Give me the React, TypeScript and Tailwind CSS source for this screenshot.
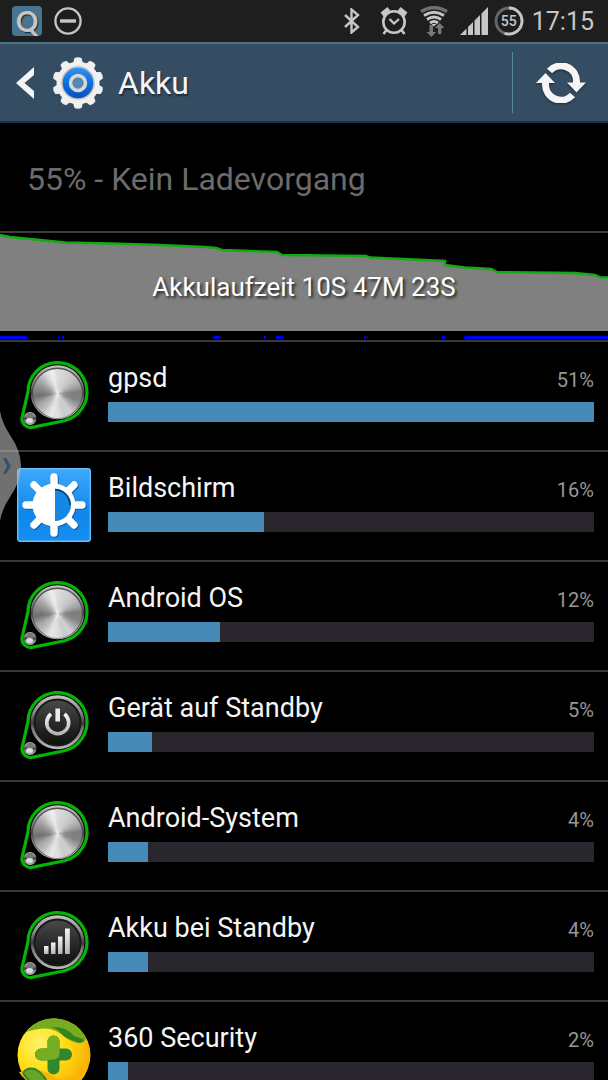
import React from 'react'

type IconKind = 'steel' | 'display' | 'power' | 'signal' | 'security'

interface UsageEntry {
  name: string
  percent: number
  fill: number
  icon: IconKind
}

// fill is the bar length relative to the biggest consumer
const usage: UsageEntry[] = [
  { name: 'gpsd', percent: 51, fill: 100, icon: 'steel' },
  { name: 'Bildschirm', percent: 16, fill: 32.2, icon: 'display' },
  { name: 'Android OS', percent: 12, fill: 23.1, icon: 'steel' },
  { name: 'Gerät auf Standby', percent: 5, fill: 9.1, icon: 'power' },
  { name: 'Android-System', percent: 4, fill: 8.2, icon: 'steel' },
  { name: 'Akku bei Standby', percent: 4, fill: 8.2, icon: 'signal' },
  { name: '360 Security', percent: 2, fill: 4.2, icon: 'security' },
]

// [start, width] of the awake periods
const awake = [
  [0, 27], [58, 1], [62, 2], [213, 7], [221, 1], [264, 2], [276, 5], [282, 1],
  [364, 2], [367, 1], [442, 3], [464, 1], [466, 142],
]

const BeltIcon = ({ kind }: { kind: IconKind }) => (
  <svg viewBox="0 0 74 74" className="h-[74px] w-[74px]" aria-hidden="true">
    <defs>
      <linearGradient id="rim" x1="0" y1="0" x2="0" y2="1">
        <stop offset="0" stopColor="#c4c4c4" />
        <stop offset="0.3" stopColor="#8a8a8a" />
        <stop offset="0.52" stopColor="#3c3c3c" />
        <stop offset="0.62" stopColor="#777" />
        <stop offset="1" stopColor="#bbb" />
      </linearGradient>
      <linearGradient id="face" x1="0" y1="0" x2="0" y2="1">
        <stop offset="0" stopColor="#4a4a4a" />
        <stop offset="0.5" stopColor="#2b2b2b" />
        <stop offset="1" stopColor="#0a120a" />
      </linearGradient>
      <linearGradient id="glyph" x1="0" y1="0" x2="0" y2="1">
        <stop offset="0" stopColor="#f4f4f4" />
        <stop offset="1" stopColor="#b5b5b5" />
      </linearGradient>
      <radialGradient id="knob" cx="0.5" cy="0.5" r="0.5">
        <stop offset="0" stopColor="#fff" stopOpacity="0.7" />
        <stop offset="0.5" stopColor="#ccc" stopOpacity="0.15" />
        <stop offset="1" stopColor="#ccc" stopOpacity="0" />
      </radialGradient>
    </defs>
    <path d="M11 33.5 A29.5 29.5 0 1 1 47.5 62.7 L15 69.4 A8.6 8.6 0 0 1 5 60 Z" fill="#000" stroke="#04b604" strokeWidth="3.2" />
    <circle cx="40.5" cy="34.3" r="27" fill="url(#rim)" />
    {kind === 'steel' ? (
      <>
        <circle cx="40.5" cy="35" r="25.5" fill="#505050" />
        <foreignObject x="16" y="11" width="49" height="49">
          <div className="h-full w-full rounded-full bg-[conic-gradient(#dcdcdc,#cfcfcf_8%,#c0c0c0_14%,#a0a0a0_20%,#7c7c7c_24%,#828282_30%,#a8a8a8_35%,#d0d0d0_40%,#cacaca_45%,#dedede_50%,#e8e8e8_55%,#c0c0c0_61%,#a4a4a4_67%,#707070_73%,#858585_78%,#a8a8a8_85%,#d4d4d4_91%,#efefef_96%,#dcdcdc)]" />
        </foreignObject>
        <circle cx="40.5" cy="35.5" r="16" fill="url(#knob)" />
      </>
    ) : (
      <circle cx="40.5" cy="34.5" r="23" fill="url(#face)" stroke="#191919" strokeWidth="2" />
    )}
    {kind === 'power' && (
      <g fill="none" stroke="url(#glyph)">
        <path d="M34 26 A11 11 0 1 0 47.4 26" strokeWidth="3.6" />
        <path d="M38.4 20.5h4.6v13h-4.600z" fill="#ececec" stroke="none" />
      </g>
    )}
    {kind === 'signal' && (
      <g fill="url(#glyph)">
        <rect x="27" y="38" width="4.5" height="8" />
        <rect x="34" y="34.5" width="4.5" height="11.5" />
        <rect x="41" y="28.5" width="4.5" height="17.5" />
        <rect x="48" y="20.5" width="4.8" height="25.5" />
      </g>
    )}
    <circle cx="13" cy="60.5" r="6.5" fill="url(#rim)" />
    <circle cx="13" cy="58" r="3.6" fill="#777" />
    <ellipse cx="12.5" cy="62.5" rx="3.5" ry="2.5" fill="#dcdcdc" />
  </svg>
)

const DisplayIcon = () => (
  <svg viewBox="0 0 74 74" className="h-[74px] w-[74px]" aria-hidden="true">
    <defs>
      <linearGradient id="display" x1="0" y1="0" x2="0" y2="1">
        <stop offset="0" stopColor="#3fa9fb" />
        <stop offset="0.6" stopColor="#0f87ea" />
        <stop offset="1" stopColor="#168ff0" />
      </linearGradient>
    </defs>
    <rect x="0.7" y="0.7" width="72.6" height="72.6" rx="2.5" fill="url(#display)" stroke="#69bff8" strokeWidth="1.4" />
    {['#1160ae', '#fff'].map((color, i) => (
      <g key={color} transform={i === 0 ? 'translate(1 1)' : undefined}>
        <path d="M37 9v56M9 37h56M17 17l40 40M57 17l-40 40" stroke={color} strokeWidth="7.4" strokeLinecap="round" />
        <circle cx="37" cy="37" r="21.5" fill={color} />
      </g>
    ))}
    <path d="M38 21 a16 16 0 0 1 0 32 z" fill="#1587e6" />
    <path d="M38 21.6 a15.4 15.4 0 0 1 15 15.4" fill="none" stroke="#143f6b" strokeWidth="1.6" />
  </svg>
)

const SecurityIcon = () => (
  <svg viewBox="0 0 74 74" className="h-[74px] w-[74px]" aria-hidden="true">
    <defs>
      <radialGradient id="ball" cx="0.3" cy="0.35" r="0.75">
        <stop offset="0" stopColor="#fff36a" />
        <stop offset="0.5" stopColor="#ffdc12" />
        <stop offset="1" stopColor="#f7ab05" />
      </radialGradient>
    </defs>
    <circle cx="37" cy="37" r="36.5" fill="url(#ball)" />
    <path d="M2 54 Q26 48 38 60 Q58 66 71 36 Q74 58 57 68 Q38 78 19 68 Q7 63 2 54" fill="#f9b406" />
    <path d="M9 14 Q22 -1 40 0.5 Q60 3 69 20 Q68 26 61 25 Q51 23 44 16 Q32 6 9 14" fill="#77ab20" />
    <path d="M36 9 Q50 9 57 18 Q63 20 67 22 Q64 27 57 23 Q47 20 42 13 Q39 10 34 9" fill="#34831f" />
    <path d="M6 55 Q10 49 18 51 Q27 56 31 66 Q21 70 15 65 Q9 60 6 55" fill="#65a52a" stroke="#328225" strokeWidth="2" />
    <path d="M36.5 23.5v27M24 36.5h25" stroke="#32872c" strokeWidth="12" strokeLinecap="round" />
    <path d="M36.5 23.5v12l-12 1" fill="none" stroke="#77ad22" strokeWidth="12" strokeLinecap="round" strokeLinejoin="round" />
  </svg>
)

const EntryIcon = ({ kind }: { kind: IconKind }) => {
  if (kind === 'display') return <DisplayIcon />
  if (kind === 'security') return <SecurityIcon />
  return <BeltIcon kind={kind} />
}

const StatusBar = () => (
  <div className="flex h-[42px] items-center justify-between bg-[#1e1e1e] pl-3 pr-3.5 text-[#c6c6c6]">
    <div className="flex items-center gap-3">
      <span className="flex h-[30px] w-[30px] items-center justify-center rounded bg-[#477591] font-['Lato'] text-[28px] leading-none font-bold [text-shadow:1px_1px_1px_#222]">Q</span>
      <svg viewBox="0 0 28 28" className="h-7 w-7" aria-hidden="true">
        <circle cx="14" cy="14" r="12.6" fill="none" stroke="currentColor" strokeWidth="2.3" />
        <path d="M6 14h16" stroke="currentColor" strokeWidth="3.4" />
      </svg>
    </div>
    <div className="flex items-center">
      <svg viewBox="0 0 16 26" className="mr-5 h-[26px] w-4" fill="none" stroke="currentColor" strokeWidth="2.4" aria-hidden="true">
        <path d="M1 7l13 12-6.5 5.5V1.500L14 7 1 19" />
      </svg>
      <svg viewBox="0 0 28 28" className="mr-3 h-7 w-7" fill="none" stroke="currentColor" aria-hidden="true">
        <circle cx="14" cy="15" r="10.7" strokeWidth="2.6" />
        <path d="M2 7.500l7-5.500M26 7.500l-7-5.500" strokeWidth="4.800" />
        <path d="M6.5 23l-3 4M21.5 23l3 4" strokeWidth="2.6" />
        <path d="M9.5 12l4.5 4.5 5-4.500" strokeWidth="2.3" />
      </svg>
      <svg viewBox="0 0 28 31" className="mr-3 h-[31px] w-7" fill="none" aria-hidden="true">
        <path d="M1 5.500Q14-2.500 27 5.500" stroke="#707070" strokeWidth="3.4" />
        <path d="M4 9.500Q14 3 24 9.500M7 13.500Q14 8.500 21 13.500M10 17Q14 14 18 17" stroke="currentColor" strokeWidth="2.9" />
        <path d="M11.5 18h5L14 20.500z" fill="currentColor" />
        <path d="M9.5 19h3.5v7h3l-4.700 5-4.700-5h2.900zM18 28v-6h-3l4.700-5 4.700 5h-3v6z" fill="#787878" />
      </svg>
      <svg viewBox="0 0 28 28" className="mr-1.5 h-7 w-7" fill="currentColor" aria-hidden="true">
        <path d="M0 28l6.500-6.500v6.500zM8 28v-8l5-5v13zM14.500 28V13.500l5.500-5.500v20zM21.500 28V6.500L28 0v28z" />
      </svg>
      <div className="relative mr-2 flex h-[30px] w-[30px] items-center justify-center">
        <svg viewBox="0 0 30 30" className="absolute inset-0 h-full w-full" fill="none" strokeWidth="2.8" aria-hidden="true">
          <circle cx="15" cy="15" r="13" stroke="#686868" />
          <path d="M15 2a13 13 0 1 1-4.500 25.200" stroke="#c6c6c6" />
        </svg>
        <span className="relative text-sm leading-none font-medium">55</span>
      </div>
      <span className="text-[25px] leading-none">17:15</span>
    </div>
  </div>
)

const GearIcon = () => (
  <svg viewBox="0 0 52 52" className="h-[52px] w-[52px]" aria-hidden="true">
    <defs>
      <linearGradient id="blue" x1="0" y1="0" x2="0" y2="1">
        <stop offset="0" stopColor="#3395ef" />
        <stop offset="0.5" stopColor="#0871df" />
        <stop offset="1" stopColor="#0450bd" />
      </linearGradient>
    </defs>
    <g fill="#f0f0f0">
      {[0, 36, 72, 108, 144, 180, 216, 252, 288, 324].map(angle => (
        <path key={angle} d="M20.5 8l2-7q3.500-1.500 7 0l2 7z" transform={`rotate(${angle} 26 26)`} />
      ))}
      <circle cx="26" cy="26" r="21.5" />
    </g>
    <circle cx="26" cy="26" r="16" fill="url(#blue)" stroke="#bdbdbd" strokeWidth="1.5" />
    <circle cx="26" cy="26" r="7.5" fill="#5788b5" stroke="#d8d8d8" strokeWidth="3.500" />
  </svg>
)

const Header = () => (
  <header className="flex h-[81px] items-center border-t-2 border-b-2 border-t-[#48718a] border-b-[#1c2f43] bg-[#354d63]">
    <button type="button" aria-label="Zurück" className="flex items-center gap-4 pl-4">
      <svg viewBox="0 0 20 34" className="h-[34px] w-5" fill="#f5f5f5" aria-hidden="true">
        <path d="M18 1v8L8.500 17 18 25v8L0 17z" />
      </svg>
      <GearIcon />
    </button>
    <h1 className="ml-3.5 text-[32px] leading-10 text-[#f5f5f5] [text-shadow:1px_2px_2px_#1a2836]">Akku</h1>
    <button type="button" aria-label="Aktualisieren" className="ml-auto flex h-[61px] w-24 items-center justify-center border-l border-[#4f8a9e]">
      <svg viewBox="0 0 50 40" className="h-10 w-[50px] drop-shadow-[0_1px_1px_#1a2836]" aria-hidden="true">
        <g fill="none" stroke="#f5f5f5" strokeWidth="7">
          <path d="M13.5 8 A15.500 15.500 0 0 1 40.500 19v2" />
          <path d="M36.500 32 A15.500 15.500 0 0 1 9.500 21v-3" />
        </g>
        <path d="M31 19.500h19l-9.500 10zM0 20h19L9.500 10z" fill="#f5f5f5" />
      </svg>
    </button>
  </header>
)

const History = () => (
  <section className="relative h-[109px] border-t-2 border-[#3c3c3c]">
    <svg viewBox="0 0 608 107" preserveAspectRatio="none" className="block h-full w-full" aria-hidden="true">
      <path d="M0 2L10 4 40 7 65 9.500 110 10.500 160 12 205 14 216 15 222 17 277 19 282 22 366 23 370 24.500 445 28 445 32 465 34.500 491 36 497 39 575 40 595 42 601 44.500 608 44.500V98H0z" fill="#808080" />
      <path d="M0 2L10 4 40 7 65 9.500 110 10.500 160 12 205 14 216 15 222 17 277 19 282 22 366 23 370 24.500 445 28 445 32 465 34.500 491 36 497 39 575 40 595 42 601 44.500 608 44.500" fill="none" stroke="#14aa14" strokeWidth="2.400" />
      <g fill="#0000f5">
        {awake.map(([x, width]) => (
          <rect key={x} x={x} y="103" width={width} height="3" />
        ))}
      </g>
    </svg>
    <p className="absolute inset-x-0 top-9 text-center text-[26px] leading-9 text-white [text-shadow:2px_2px_3px_#222]">Akkulaufzeit 10S 47M 23S</p>
  </section>
)

const UsageRow = ({ entry }: { entry: UsageEntry }) => (
  <li className="flex h-[110px] items-start border-t-2 border-[#383838] pt-4 pr-3.5 pl-[17px]">
    <EntryIcon kind={entry.icon} />
    <div className="ml-[17px] min-w-0 flex-1">
      <div className="flex h-11 items-baseline justify-between">
        <span className="text-[27px] leading-10 text-[#f5f5f5]">{entry.name}</span>
        <span className="text-xl leading-10 text-[#979797]">{entry.percent}%</span>
      </div>
      <div role="progressbar" aria-label={entry.name} aria-valuenow={entry.percent} className="h-5 bg-[#29262e]">
        <div className="h-full bg-[#468ab7]" style={{ width: `${entry.fill}%` }} />
      </div>
    </div>
  </li>
)

export default function App() {
  return (
    <div className="relative h-screen overflow-hidden bg-black font-['Roboto',sans-serif]">
      <StatusBar />
      <Header />
      <main>
        <p className="flex h-[108px] items-center pt-1 pl-[27px] text-[32px] leading-10 text-[#6b6b6b]">55% - Kein Ladevorgang</p>
        <History />
        <ul>
          {usage.map(entry => (
            <UsageRow key={entry.name} entry={entry} />
          ))}
        </ul>
      </main>
      {/* Edge handle of the multi window tray */}
      <button type="button" aria-label="Multi Window" className="absolute top-[411px] left-0 h-[110px] w-[22px]">
        <svg viewBox="0 0 22 110" className="h-full w-full" aria-hidden="true">
          <path d="M0 0Q2 12 10 24 21 40 21 55 21 70 10 86 2 98 0 110z" fill="#b5b5b5" fillOpacity="0.62" />
          <path d="M3 47h3l5 8-5 8H3l4-8z" fill="#34506b" />
        </svg>
      </button>
    </div>
  )
}
